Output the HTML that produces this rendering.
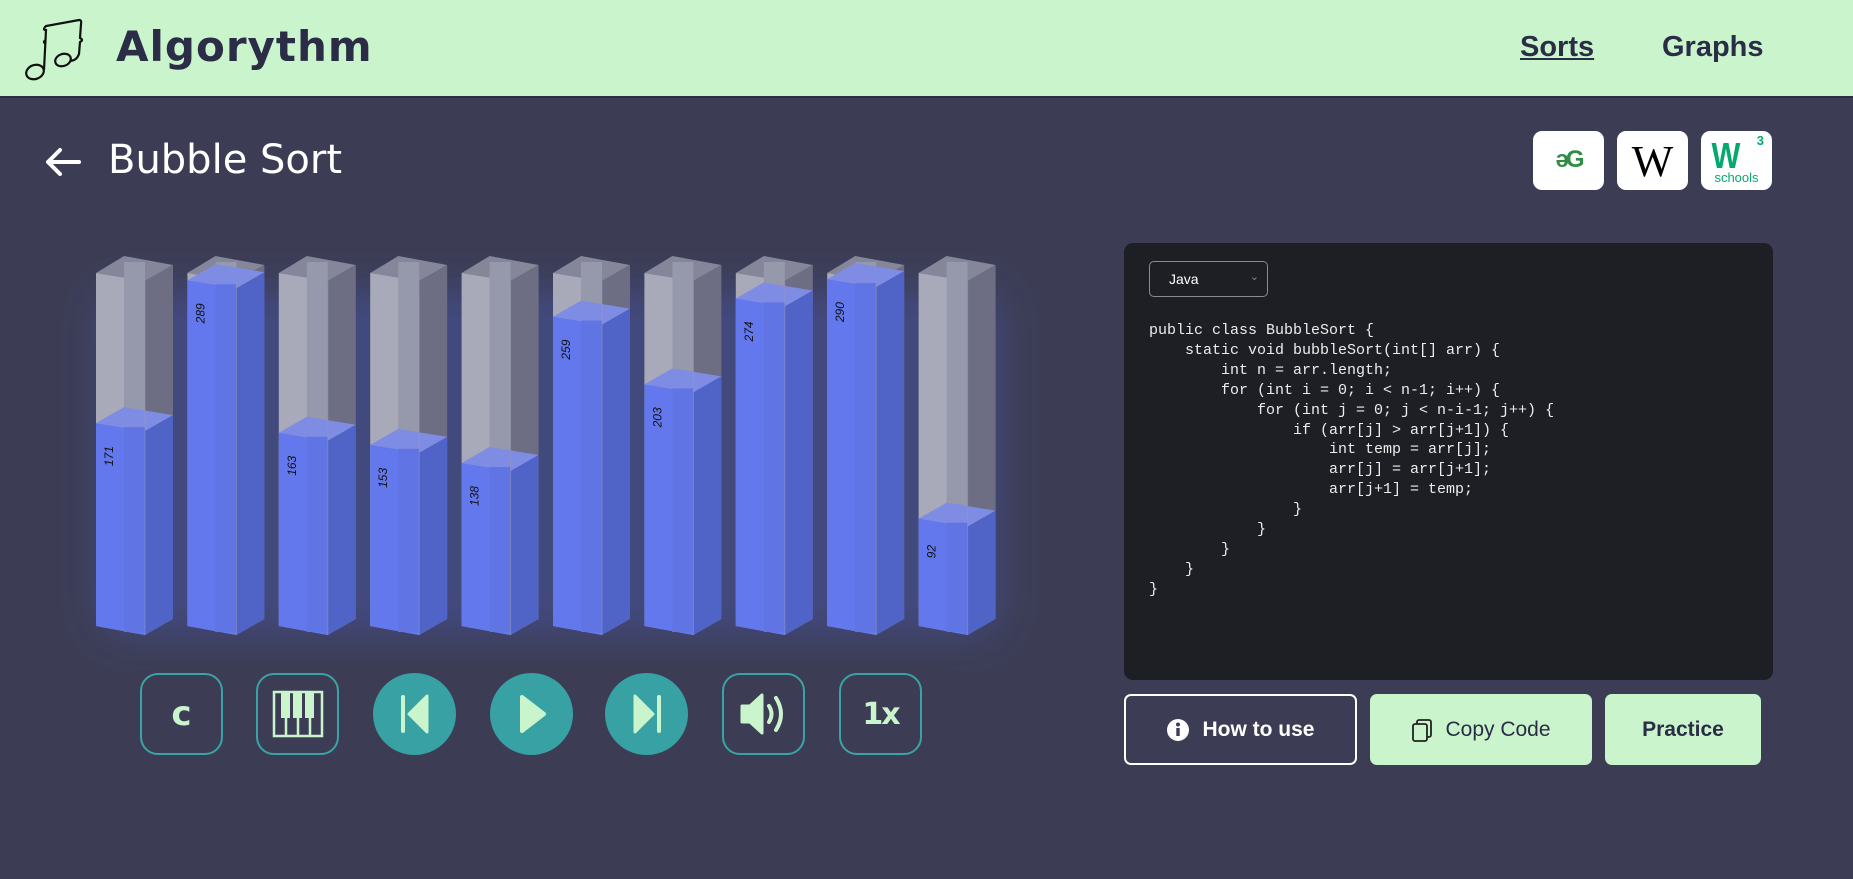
<!DOCTYPE html>
<html><head><meta charset="utf-8">
<style>
*{margin:0;padding:0;box-sizing:border-box}
body{width:1853px;height:879px;overflow:hidden;background:#3c3d55;font-family:"Liberation Sans",sans-serif;position:relative}
.hdr{position:absolute;left:0;top:0;width:1853px;height:98px;background:#c9f4cc;border-bottom:2px solid #2a2d3f}
.brand{position:absolute;left:116px;top:22px;font-family:"DejaVu Sans",sans-serif;font-weight:bold;font-size:42px;color:#2a2d45;letter-spacing:1px}
.nav{position:absolute;top:31px;font-weight:bold;font-size:29px;color:#2a2d45}
.title{position:absolute;left:108px;top:137px;font-family:"DejaVu Sans",sans-serif;font-size:40px;color:#fff}
.ref{position:absolute;top:131px;width:71px;height:59px;background:#fff;border-radius:9px;text-align:center}
.panel{position:absolute;left:1124px;top:243px;width:649px;height:437px;background:#1e1f24;border-radius:9px}
.sel{position:absolute;left:25px;top:18px;width:119px;height:36px;border:1px solid #8a8a90;border-radius:5px;color:#fff;font-size:14px;padding:9px 0 0 19px}
.sel span{position:absolute;right:8px;top:8px;color:#888;font-size:11px}
pre{position:absolute;left:25px;top:78px;font-family:"Liberation Mono",monospace;font-size:15px;line-height:19.9px;color:#ececec}
.btn{position:absolute;top:694px;height:71px;border-radius:7px;font-weight:bold;font-size:21px;color:#2a2d45;display:flex;align-items:center;justify-content:center;gap:12px}
.cb{position:absolute;top:673px;width:83px;height:82px;display:flex;align-items:center;justify-content:center}
.o{border:2px solid #3aa3a3;border-radius:18px}
.f{background:#37a1a3;border-radius:50%}
</style></head><body>
<div class="hdr">
<svg style="position:absolute;left:24px;top:18px" width="68" height="64" viewBox="0 0 68 64"><g fill="none" stroke="#111" stroke-width="2.2"><ellipse cx="11" cy="54" rx="9" ry="7" transform="rotate(-20 11 54)"/><ellipse cx="39" cy="42" rx="8" ry="6" transform="rotate(-20 39 42)"/><path d="M20 52 L22 12 Q18 12 22 8 L55 2 Q58 2 57 6 L56 20 Q60 22 56 24 L55 36 Q53 42 47 43"/><path d="M22 22 Q18 24 22 26"/></g></svg>
<div class="brand">Algorythm</div>
<div class="nav" style="left:1520px;text-decoration:underline">Sorts</div>
<div class="nav" style="left:1662px">Graphs</div>
</div>
<svg style="position:absolute;left:44px;top:147px" width="38" height="30" viewBox="0 0 38 30"><path d="M35 15H4M16 3L4 15L16 27" fill="none" stroke="#fff" stroke-width="4" stroke-linecap="round" stroke-linejoin="round"/></svg>
<div class="title">Bubble Sort</div>
<div class="ref" style="left:1533px"><div style="color:#2f8d46;font-size:24px;font-weight:bold;margin-top:15px;letter-spacing:-3px">əG</div></div>
<div class="ref" style="left:1617px"><div style="font-family:'Liberation Serif',serif;font-size:44px;margin-top:5px;color:#000">W</div></div>
<div class="ref" style="left:1701px"><div style="position:absolute;left:8px;top:4px;color:#04aa6d;font-size:36px;font-weight:900;transform:scaleX(0.85)">W</div><div style="position:absolute;right:8px;top:2px;color:#04aa6d;font-size:13px;font-weight:bold">3</div><div style="position:absolute;left:0;right:0;bottom:5px;color:#04aa6d;font-size:13px">schools</div></div>

<svg style="position:absolute;left:0;top:230px" width="1100" height="440" viewBox="0 230 1100 440">
<defs><filter id="bl" x="-20%" y="-20%" width="140%" height="140%"><feGaussianBlur stdDeviation="18"/></filter></defs>
<rect x="100" y="290" width="900" height="345" rx="30" fill="rgba(80,100,220,0.30)" filter="url(#bl)"/>
<g id="bars"></g>
</svg>
<script>
const vals=[171,289,163,153,138,259,203,274,290,92];
let s='';
vals.forEach((v,i)=>{
 const x=96+91.4*i, yf=630-v*1.21;
 s+=`<polygon points="${x},273 ${x+28},256 ${x+77},265 ${x+49},281" fill="#858699"/>`;
 s+=`<polygon points="${x},273 ${x+49},281 ${x+49},635 ${x},626" fill="#a9aab9"/>`;
 s+=`<rect x="${x+28}" y="262" width="21" height="370" fill="#9698ab"/>`;
 s+=`<polygon points="${x+49},281 ${x+77},265 ${x+77},619 ${x+49},635" fill="#6d6e83"/>`;
 s+=`<polygon points="${x},${yf} ${x+28},${yf-16} ${x+77},${yf-8} ${x+49},${yf+8}" fill="#7e8ce4"/>`;
 s+=`<polygon points="${x},${yf} ${x+49},${yf+8} ${x+49},635 ${x},626" fill="#6378ec"/>`;
 s+=`<rect x="${x+28}" y="${yf+4}" width="21" height="${628-yf}" fill="#6074e4"/>`;
 s+=`<polygon points="${x+49},${yf+8} ${x+77},${yf-8} ${x+77},619 ${x+49},635" fill="#5064c8"/>`;
 s+=`<line x1="${x+49}" y1="281" x2="${x+49}" y2="635" stroke="#9a9bb0" stroke-width="1" opacity=".5"/>`;
 s+=`<text transform="translate(${x+17},${yf+33}) rotate(-90)" font-family="Liberation Sans" font-style="italic" font-size="12" fill="#111" text-anchor="middle">${v}</text>`;
});
document.getElementById('bars').innerHTML=s;
</script>

<div class="cb o" style="left:140px"><span style="font-family:'DejaVu Sans';font-weight:900;font-size:34px;color:#c9f4cc">c</span></div>
<div class="cb o" style="left:256px"><svg width="54" height="50" viewBox="0 0 54 50"><rect x="3" y="3" width="48" height="44" fill="none" stroke="#c9f4cc" stroke-width="2.5"/><g stroke="#c9f4cc" stroke-width="2.5"><line x1="15" y1="3" x2="15" y2="47"/><line x1="27" y1="3" x2="27" y2="47"/><line x1="39" y1="3" x2="39" y2="47"/></g><g fill="#c9f4cc"><rect x="10" y="3" width="9" height="26"/><rect x="22" y="3" width="9" height="26"/><rect x="34" y="3" width="9" height="26"/></g></svg></div>
<div class="cb f" style="left:373px"><svg width="36" height="42" viewBox="0 0 36 42"><rect x="4" y="2" width="4" height="38" rx="2" fill="#c9f4cc"/><path d="M30 3 L12 21 L30 39 Z" fill="#c9f4cc" stroke="#c9f4cc" stroke-linejoin="round" stroke-width="3"/></svg></div>
<div class="cb f" style="left:490px"><svg width="36" height="42" viewBox="0 0 36 42"><path d="M8 4 L30 21 L8 38 Z" fill="#c9f4cc" stroke="#c9f4cc" stroke-linejoin="round" stroke-width="4"/></svg></div>
<div class="cb f" style="left:605px"><svg width="36" height="42" viewBox="0 0 36 42"><rect x="28" y="2" width="4" height="38" rx="2" fill="#c9f4cc"/><path d="M6 3 L24 21 L6 39 Z" fill="#c9f4cc" stroke="#c9f4cc" stroke-linejoin="round" stroke-width="3"/></svg></div>
<div class="cb o" style="left:722px"><svg width="52" height="48" viewBox="0 0 52 48"><path d="M4 16 H12 L24 5 V43 L12 32 H4 Z" fill="#c9f4cc" stroke="#c9f4cc" stroke-linejoin="round" stroke-width="3"/><path d="M31 16 Q36 24 31 32" fill="none" stroke="#c9f4cc" stroke-width="4" stroke-linecap="round"/><path d="M38 8 Q48 24 38 40" fill="none" stroke="#c9f4cc" stroke-width="4" stroke-linecap="round"/></svg></div>
<div class="cb o" style="left:839px"><span style="font-family:'DejaVu Sans';font-weight:900;font-size:30px;color:#c9f4cc;letter-spacing:-2px">1x</span></div>

<div class="panel">
<div class="sel">Java<span>&#8964;</span></div>
<pre>public class BubbleSort {
    static void bubbleSort(int[] arr) {
        int n = arr.length;
        for (int i = 0; i &lt; n-1; i++) {
            for (int j = 0; j &lt; n-i-1; j++) {
                if (arr[j] &gt; arr[j+1]) {
                    int temp = arr[j];
                    arr[j] = arr[j+1];
                    arr[j+1] = temp;
                }
            }
        }
    }
}</pre>
</div>
<div class="btn" style="left:1124px;width:233px;border:2px solid #fff;color:#fff"><svg width="24" height="24"><circle cx="12" cy="12" r="11" fill="#fff"/><rect x="10.3" y="10" width="3.4" height="8" fill="#3c3d55"/><circle cx="12" cy="6.5" r="2" fill="#3c3d55"/></svg>How to use</div>
<div class="btn" style="left:1370px;width:222px;background:#c9f4cc;font-weight:normal"><svg width="22" height="24"><rect x="6" y="2" width="14" height="17" rx="2" fill="none" stroke="#222" stroke-width="1.8"/><rect x="2" y="6" width="14" height="17" rx="2" fill="#c9f4cc" stroke="#222" stroke-width="1.8"/></svg>Copy Code</div>
<div class="btn" style="left:1605px;width:156px;background:#c9f4cc">Practice</div>
</body></html>
